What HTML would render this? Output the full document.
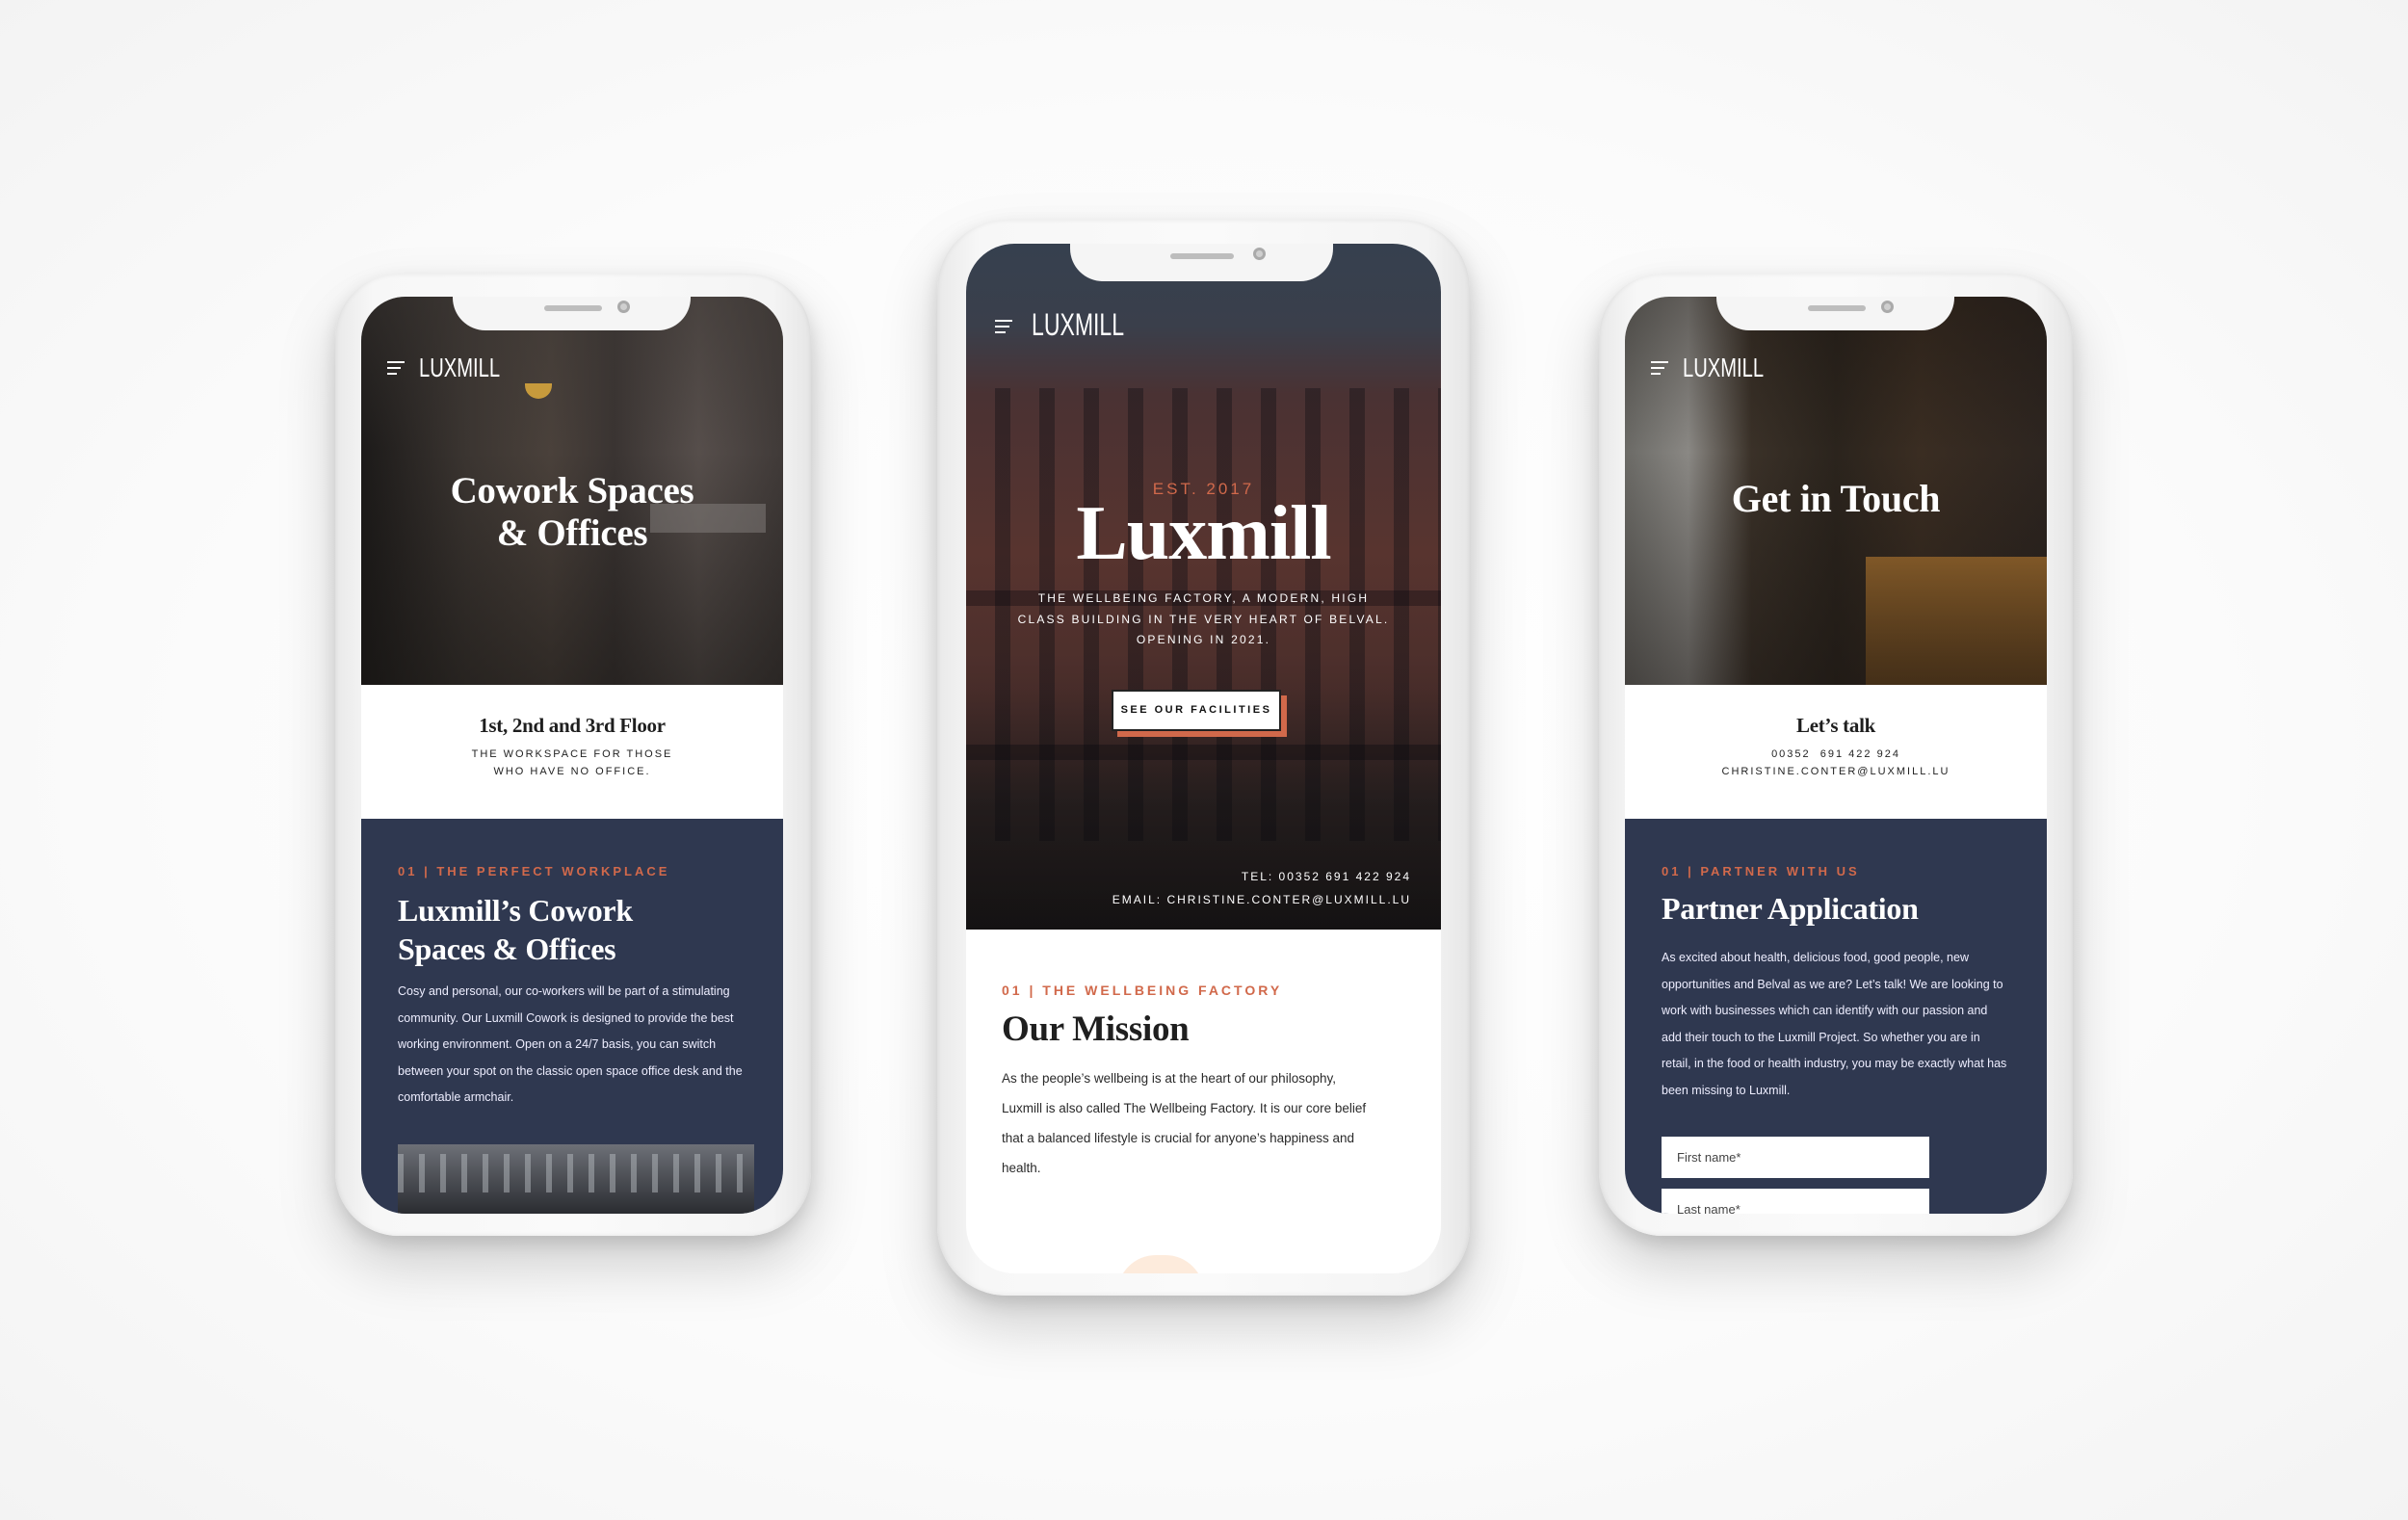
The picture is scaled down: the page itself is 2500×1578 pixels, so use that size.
<!DOCTYPE html>
<html><head><meta charset="utf-8"><style>
*{margin:0;padding:0;box-sizing:border-box}
body{width:2500px;height:1578px;overflow:hidden;background:radial-gradient(ellipse at 50% 50%,#ffffff 0%,#fbfbfb 60%,#f3f3f3 100%);font-family:"Liberation Sans",sans-serif;position:relative}
.body{position:absolute;background:linear-gradient(90deg,#e9e9e9,#f7f7f7 8%,#fafafa 50%,#f4f4f4 92%,#e6e6e6);box-shadow:0 30px 60px rgba(0,0,0,.18),0 8px 18px rgba(0,0,0,.12),inset 0 0 6px rgba(0,0,0,.08)}
.scr{position:absolute;overflow:hidden;background:#fff}
.notch{position:absolute;top:0;background:#f5f5f5;border-radius:0 0 34px 34px;z-index:5}
.spk{position:absolute;height:6px;border-radius:3px;background:#bdbdbd;z-index:6}
.cam{position:absolute;width:13px;height:13px;border-radius:50%;background:#cfcfcf;border:3px solid #aaa;z-index:6}
.a{position:absolute}
.serif{font-family:"Liberation Serif",serif;font-weight:bold;letter-spacing:-0.3px}
.logo{font-family:"Liberation Sans",sans-serif;color:#fff;letter-spacing:0px;transform:scaleX(.72);transform-origin:0 0}
.menu{position:absolute;width:18px}
.menu i{display:block;height:2px;background:#fff;margin-bottom:4px}
.lab{font-family:"Liberation Sans",sans-serif;font-weight:bold;color:#d1694b;letter-spacing:3px}
.caps{letter-spacing:2px;text-transform:uppercase}
.navy{background:#2f3850}
</style></head><body>

<!-- LEFT PHONE -->
<div class="body" style="left:348px;top:284px;width:494px;height:999px;border-radius:66px"></div>
<div class="scr" style="left:375px;top:308px;width:438px;height:952px;border-radius:46px">
  <div class="a" style="left:0;top:0;width:438px;height:403px;background:linear-gradient(90deg,#1c1a19 0%,#3b3531 25%,#4a413b 45%,#3a3432 60%,#564e4b 80%,#403a38 100%)"></div>
  <div class="a" style="left:0;top:0;width:438px;height:403px;background:linear-gradient(180deg,rgba(60,55,52,.5) 0%,rgba(0,0,0,0) 40%,rgba(20,18,16,.5) 100%)"></div>
  <div class="a" style="left:170px;top:90px;width:28px;height:16px;background:#c79a3c;border-radius:0 0 14px 14px"></div>
  <div class="a" style="left:300px;top:215px;width:120px;height:30px;background:#8d8a88;opacity:.45"></div>
  <div class="menu" style="left:27px;top:67px"><i></i><i style="width:14px"></i><i style="width:10px"></i></div>
  <div class="a logo" style="left:60px;top:58px;font-size:28px">LUXMILL</div>
  <div class="a serif" style="left:0;width:438px;top:180px;text-align:center;color:#fff;font-size:39px;line-height:44px">Cowork Spaces<br>&amp; Offices</div>
  <div class="a" style="left:0;top:403px;width:438px;height:139px;background:#fff"></div>
  <div class="a serif" style="left:0;width:438px;top:433px;text-align:center;font-size:21px;color:#1e1e1e">1st, 2nd and 3rd Floor</div>
  <div class="a caps" style="left:0;width:438px;top:466px;text-align:center;font-size:11px;line-height:18px;color:#222">The workspace for those<br>who have no office.</div>
  <div class="a navy" style="left:0;top:542px;width:438px;height:410px"></div>
  <div class="a lab" style="left:38px;top:589px;font-size:13px">01 | THE PERFECT WORKPLACE</div>
  <div class="a serif" style="left:38px;top:617px;font-size:32px;line-height:40px;color:#fff">Luxmill’s Cowork<br>Spaces &amp; Offices</div>
  <div class="a" style="left:38px;top:708px;width:360px;font-size:12.5px;line-height:27.6px;color:#eef">Cosy and personal, our co-workers will be part of a stimulating community. Our Luxmill Cowork is designed to provide the best working environment. Open on a 24/7 basis, you can switch between your spot on the classic open space office desk and the comfortable armchair.</div>
  <div class="a" style="left:38px;top:880px;width:370px;height:72px;background:linear-gradient(180deg,#6d7077,#2a2c31)"></div>
  <div class="a" style="left:38px;top:890px;width:370px;height:40px;background:repeating-linear-gradient(90deg,rgba(180,185,190,.5) 0 6px,rgba(0,0,0,0) 6px 22px)"></div>
  <div class="notch" style="left:95px;width:247px;height:35px"></div>
  <div class="spk" style="left:190px;top:9px;width:60px"></div>
  <div class="cam" style="left:266px;top:4px"></div>
</div>

<!-- CENTER PHONE -->
<div class="body" style="left:973px;top:228px;width:553px;height:1117px;border-radius:72px"></div>
<div class="scr" style="left:1003px;top:253px;width:493px;height:1069px;border-radius:50px">
  <div class="a" style="left:0;top:0;width:493px;height:712px;background:linear-gradient(180deg,#36404f 0%,#3a3f4b 12%,#4a3233 22%,#58342f 45%,#4a2e2b 65%,#2a2222 82%,#1d1a1b 100%)"></div>
  <div class="a" style="left:0;top:150px;width:493px;height:470px;background:repeating-linear-gradient(90deg,rgba(0,0,0,0) 0 30px,rgba(15,15,20,.4) 30px 46px)"></div>
  <div class="a" style="left:0;top:360px;width:493px;height:16px;background:rgba(10,10,15,.35)"></div>
  <div class="a" style="left:0;top:520px;width:493px;height:16px;background:rgba(10,10,15,.35)"></div>
  <div class="a" style="left:0;top:0;width:493px;height:712px;background:linear-gradient(180deg,rgba(0,0,0,0) 60%,rgba(0,0,0,.3) 100%)"></div>
  <div class="menu" style="left:30px;top:79px"><i></i><i style="width:15px"></i><i style="width:11px"></i></div>
  <div class="a logo" style="left:68px;top:66px;font-size:32px">LUXMILL</div>
  <div class="a lab" style="left:0;width:493px;top:245px;text-align:center;font-size:17px;font-weight:normal">EST. 2017</div>
  <div class="a serif" style="left:0;width:493px;top:258px;text-align:center;font-size:80px;line-height:86px;color:#fff;letter-spacing:-1px">Luxmill</div>
  <div class="a caps" style="left:0;width:493px;top:358px;text-align:center;font-size:12px;line-height:21.5px;color:#fff;letter-spacing:2.2px">The wellbeing factory, a modern, high<br>class building in the very heart of belval.<br>Opening in 2021.</div>
  <div class="a" style="left:157px;top:469px;width:176px;height:43px;background:#d1694b"></div>
  <div class="a" style="left:151px;top:463px;width:176px;height:43px;background:#fff;border:2px solid #222;text-align:center;font-weight:bold;font-size:11px;line-height:39px;letter-spacing:2.5px;color:#111">SEE OUR FACILITIES</div>
  <div class="a caps" style="right:31px;top:645px;text-align:right;font-size:12px;line-height:24px;color:#fff;letter-spacing:2px">Tel: 00352 691 422 924<br>Email: christine.conter@luxmill.lu</div>
  <div class="a lab" style="left:37px;top:767px;font-size:14px">01 | THE WELLBEING FACTORY</div>
  <div class="a serif" style="left:37px;top:794px;font-size:37px;color:#1f1f1f">Our Mission</div>
  <div class="a" style="left:37px;top:851px;width:392px;font-size:13.5px;line-height:31px;color:#2a2a2a">As the people’s wellbeing is at the heart of our philosophy, Luxmill is also called The Wellbeing Factory. It is our core belief that a balanced lifestyle is crucial for anyone’s happiness and health.</div>
  <div class="a" style="left:157px;top:1050px;width:90px;height:40px;background:#fdebdc;border-radius:40px 40px 0 0"></div>
  <div class="notch" style="left:108px;width:273px;height:39px"></div>
  <div class="spk" style="left:212px;top:10px;width:66px"></div>
  <div class="cam" style="left:298px;top:4px"></div>
</div>

<!-- RIGHT PHONE -->
<div class="body" style="left:1660px;top:284px;width:492px;height:999px;border-radius:66px"></div>
<div class="scr" style="left:1687px;top:308px;width:438px;height:952px;border-radius:46px">
  <div class="a" style="left:0;top:0;width:438px;height:403px;background:linear-gradient(90deg,#6b6a66 0%,#8a8884 15%,#3a3128 30%,#2b241d 50%,#3a2d22 70%,#2d2520 100%)"></div>
  <div class="a" style="left:250px;top:270px;width:188px;height:133px;background:linear-gradient(180deg,#9b6a2e,#6b4820)"></div>
  <div class="a" style="left:0;top:0;width:438px;height:403px;background:linear-gradient(180deg,rgba(20,15,12,.35) 0%,rgba(0,0,0,0) 40%,rgba(20,16,14,.45) 100%)"></div>
  <div class="menu" style="left:27px;top:67px"><i></i><i style="width:14px"></i><i style="width:10px"></i></div>
  <div class="a logo" style="left:60px;top:58px;font-size:28px">LUXMILL</div>
  <div class="a serif" style="left:0;width:438px;top:186px;text-align:center;color:#fff;font-size:40px">Get in Touch</div>
  <div class="a" style="left:0;top:403px;width:438px;height:139px;background:#fff"></div>
  <div class="a serif" style="left:0;width:438px;top:433px;text-align:center;font-size:21px;color:#1e1e1e">Let’s talk</div>
  <div class="a caps" style="left:0;width:438px;top:466px;text-align:center;font-size:11px;line-height:18px;color:#222">00352&nbsp; 691 422 924<br>christine.conter@luxmill.lu</div>
  <div class="a navy" style="left:0;top:542px;width:438px;height:410px"></div>
  <div class="a lab" style="left:38px;top:589px;font-size:13px">01 | PARTNER WITH US</div>
  <div class="a serif" style="left:38px;top:617px;font-size:32px;color:#fff">Partner Application</div>
  <div class="a" style="left:38px;top:673px;width:360px;font-size:12.5px;line-height:27.6px;color:#eef">As excited about health, delicious food, good people, new opportunities and Belval as we are? Let’s talk! We are looking to work with businesses which can identify with our passion and add their touch to the Luxmill Project. So whether you are in retail, in the food or health industry, you may be exactly what has been missing to Luxmill.</div>
  <div class="a" style="left:38px;top:872px;width:278px;height:43px;background:#fff;font-size:13px;line-height:43px;padding-left:16px;color:#444">First name*</div>
  <div class="a" style="left:38px;top:926px;width:278px;height:43px;background:#fff;font-size:13px;line-height:43px;padding-left:16px;color:#444">Last name*</div>
  <div class="notch" style="left:95px;width:247px;height:35px"></div>
  <div class="spk" style="left:190px;top:9px;width:60px"></div>
  <div class="cam" style="left:266px;top:4px"></div>
</div>
</body></html>
